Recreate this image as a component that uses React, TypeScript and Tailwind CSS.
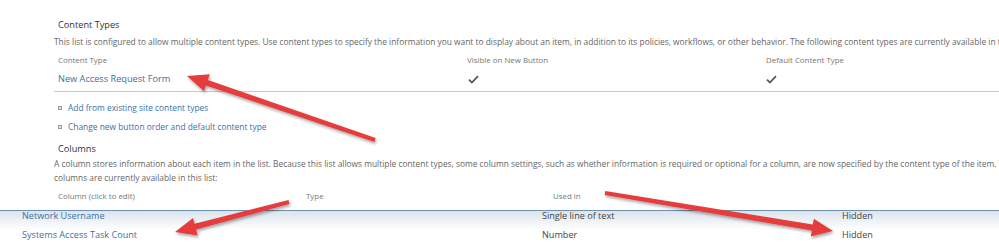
import React from 'react'

type Pt = [number, number]

const ARROWS: { tail: Pt; tip: Pt }[] = [
  { tail: [375, 140], tip: [187, 76] },
  { tail: [289, 202], tip: [175, 232] },
  { tail: [605, 193], tip: [833, 231] },
]

function arrowPoints(tail: Pt, tip: Pt, w = 6, hl = 21, hw = 18): string {
  const dx = tip[0] - tail[0]
  const dy = tip[1] - tail[1]
  const len = Math.hypot(dx, dy)
  const ux = dx / len
  const uy = dy / len
  const nx = -uy
  const ny = ux
  const bx = tip[0] - ux * hl
  const by = tip[1] - uy * hl
  const pts: Pt[] = [
    [tail[0] + (nx * w) / 3, tail[1] + (ny * w) / 3],
    [bx + (nx * w) / 2, by + (ny * w) / 2],
    [bx + (nx * hw) / 2, by + (ny * hw) / 2],
    tip,
    [bx - (nx * hw) / 2, by - (ny * hw) / 2],
    [bx - (nx * w) / 2, by - (ny * w) / 2],
    [tail[0] - (nx * w) / 3, tail[1] - (ny * w) / 3],
  ]
  return pts.map((p) => `${p[0].toFixed(1)},${p[1].toFixed(1)}`).join(' ')
}

function Check() {
  return (
    <svg width="11" height="9" viewBox="0 0 11 9" className="block">
      <path d="M1 4.6 L3.9 7.6 L10 1.2" fill="none" stroke="#555" strokeWidth="1.7" />
    </svg>
  )
}

function Bullet() {
  return <span className="inline-block w-[4px] h-[4px] border border-[#9a9a9a] bg-[#e8e8e8] mr-[6px] shrink-0" />
}

const CONTENT_TYPES = [{ name: 'New Access Request Form', visible: true, isDefault: true }]

const COLUMNS = [
  { name: 'Network Username', type: 'Single line of text', usedIn: 'Hidden' },
  { name: 'Systems Access Task Count', type: 'Number', usedIn: 'Hidden' },
]

export default function App() {
  return (
    <div className="relative w-[999px] h-[247px] overflow-hidden bg-white font-['Open_Sans',sans-serif] whitespace-nowrap">
      <div className="pl-[54px] pt-[17px]">
        <div className="pl-[4px] h-[16px] leading-[16px] text-[9.2px] text-[#333]">Content Types</div>
        <div className="h-[18px] leading-[18px] text-[8.4px] text-[#666]">
          This list is configured to allow multiple content types. Use content types to specify the information you want to display about an item, in addition to its policies, workflows, or other behavior. The following content types are currently available in this list:
        </div>
        <div className="pl-[4px] grid grid-cols-[409px_299px_1fr] h-[18px] leading-[18px] text-[7.9px] text-[#777]">
          <span>Content Type</span>
          <span>Visible on New Button</span>
          <span>Default Content Type</span>
        </div>
        {CONTENT_TYPES.map((ct) => (
          <div key={ct.name} className="pl-[4px] grid grid-cols-[409px_299px_1fr] items-center h-[20px] text-[9.2px] text-[#3b6fa4]">
            <span>{ct.name}</span>
            <span className="pl-[1px]">{ct.visible && <Check />}</span>
            <span>{ct.isDefault && <Check />}</span>
          </div>
        ))}
        <div className="mt-[2px] border-t border-[#c9c9c9]" />
        <div className="mt-[7px] pl-[4px] flex flex-col gap-[1px] text-[8.4px] text-[#3b6fa4]">
          <div className="flex items-center h-[18px]">
            <Bullet />
            <span>Add from existing site content types</span>
          </div>
          <div className="flex items-center h-[18px]">
            <Bullet />
            <span>Change new button order and default content type</span>
          </div>
        </div>
        <div className="mt-[5px] pl-[4px] h-[16px] leading-[16px] text-[9.2px] text-[#333]">Columns</div>
        <div className="leading-[14px] text-[8.4px] text-[#666]">
          <div>
            A column stores information about each item in the list. Because this list allows multiple content types, some column settings, such as whether information is required or optional for a column, are now specified by the content type of the item. The following
          </div>
          <div>columns are currently available in this list:</div>
        </div>
        <div className="mt-[2px] pl-[4px] grid grid-cols-[248px_247px_1fr] h-[18px] leading-[18px] text-[7.9px] text-[#777]">
          <span>Column (click to edit)</span>
          <span>Type</span>
          <span>Used in</span>
        </div>
      </div>

      <div className="mt-[5px] border-t border-[#6d8fb1] bg-gradient-to-b from-[#dbe4ec] to-white h-[20px]">
        <div className="-mt-[5px] pl-[22px] text-[9.1px]">
          {COLUMNS.map((c) => (
            <div key={c.name} className="grid grid-cols-[520px_300px_1fr] h-[19px] leading-[19px]">
              <span className="text-[#3b6fa4]">{c.name}</span>
              <span className="text-[#444]">{c.type}</span>
              <span className="text-[#444]">{c.usedIn}</span>
            </div>
          ))}
        </div>
      </div>

      <svg className="absolute inset-0 pointer-events-none" width="999" height="247">
        <defs>
          <filter id="shadow" x="-20%" y="-50%" width="140%" height="200%">
            <feDropShadow dx="1" dy="2" stdDeviation="1.6" floodColor="#000" floodOpacity="0.35" />
          </filter>
        </defs>
        {ARROWS.map((a, i) => (
          <polygon key={i} points={arrowPoints(a.tail, a.tip)} fill="#e53d3d" filter="url(#shadow)" />
        ))}
      </svg>
    </div>
  )
}
